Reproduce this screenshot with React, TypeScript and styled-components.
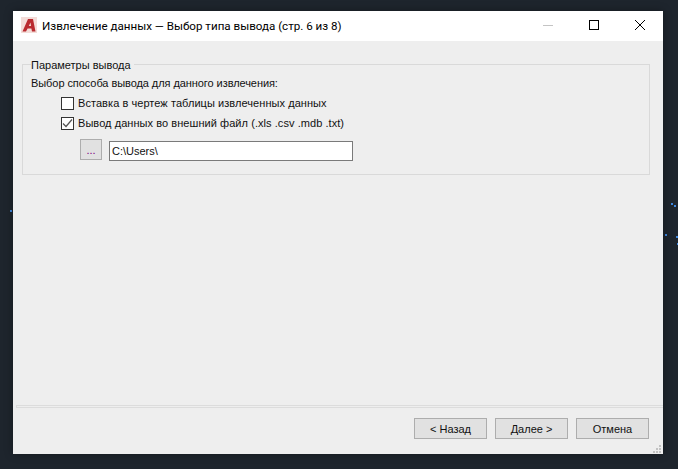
import styled, { createGlobalStyle } from "styled-components";

const dots = [
  { x: 10, y: 210 },
  { x: 671, y: 203 },
  { x: 674, y: 205 },
  { x: 665, y: 234 },
  { x: 676, y: 236 },
  { x: 677, y: 243 },
];

export default function App() {
  return (
    <Desktop>
      <GlobalStyle />
      {dots.map((d, i) => (
        <Dot key={i} $x={d.x} $y={d.y} />
      ))}
      <Dialog>
        <TitleBar>
          <AppLogo viewBox="0 0 16 16">
            <rect width="16" height="16" fill="#f3dcd8" />
            <path d="M1.5 14.5 L7 2 H12 L14.5 14.5 H11 L10.4 11.5 H6.6 L5 14.5 Z" fill="#b92a2f" />
            <path d="M7.8 9 H10 L9.5 5.4 Z" fill="#f3dcd8" />
          </AppLogo>
          <Title>Извлечение данных — Выбор типа вывода (стр. 6 из 8)</Title>
          <WindowButtons>
            <WinButton>
              <svg width="10" height="10" viewBox="0 0 10 10">
                <rect x="0" y="5" width="10" height="1" fill="#c4c4c4" />
              </svg>
            </WinButton>
            <WinButton>
              <svg width="10" height="10" viewBox="0 0 10 10">
                <rect x="0.5" y="0.5" width="9" height="9" fill="none" stroke="#000" />
              </svg>
            </WinButton>
            <WinButton>
              <svg width="10" height="10" viewBox="0 0 10 10" shapeRendering="crispEdges">
                <path d="M0 0 L10 10 M10 0 L0 10" stroke="#000" strokeWidth="1" />
              </svg>
            </WinButton>
          </WindowButtons>
        </TitleBar>
        <Body>
          <Content>
            <Group>
              <Legend>Параметры вывода</Legend>
              <Prompt>Выбор способа вывода для данного извлечения:</Prompt>
              <Options>
                <Option>
                  <Check />
                  <OptionLabel>Вставка в чертеж таблицы извлеченных данных</OptionLabel>
                </Option>
                <Option>
                  <Check>
                    <svg width="11" height="11" viewBox="0 0 11 11">
                      <path d="M1 5.5 L4 8.5 L10 1.5" fill="none" stroke="#555" strokeWidth="1.2" />
                    </svg>
                  </Check>
                  <OptionLabel>Вывод данных во внешний файл (.xls .csv .mdb .txt)</OptionLabel>
                </Option>
              </Options>
              <PathRow>
                <BrowseButton>...</BrowseButton>
                <PathInput>C:\Users\</PathInput>
              </PathRow>
            </Group>
          </Content>
          <Separator />
          <Footer>
            <FooterButton>&lt; Назад</FooterButton>
            <FooterButton>Далее &gt;</FooterButton>
            <FooterButton>Отмена</FooterButton>
          </Footer>
          <Grip viewBox="0 0 9 9">
            <path d="M6 0h2v2H6zM3 3h2v2H3zM6 3h2v2H6zM0 6h2v2H0zM3 6h2v2H3zM6 6h2v2H6z" fill="#c2c2c2" />
          </Grip>
        </Body>
      </Dialog>
    </Desktop>
  );
}

const GlobalStyle = createGlobalStyle`
  html, body {
    margin: 0;
    padding: 0;
    background: #1e252d;
  }
`;

const Desktop = styled.div`
  position: relative;
  width: 678px;
  height: 469px;
  box-sizing: border-box;
  padding: 11px 15px 15px 13px;
  overflow: hidden;
  background: #1e252d;
  font-family: "Liberation Sans", Arial, sans-serif;
  font-size: 11px;
  color: #111;
`;

const Dot = styled.div<{ $x: number; $y: number }>`
  position: absolute;
  left: ${(p) => p.$x}px;
  top: ${(p) => p.$y}px;
  width: 2px;
  height: 2px;
  background: #3f86dc;
`;

const Dialog = styled.div`
  position: relative;
  width: 650px;
  height: 443px;
  display: flex;
  flex-direction: column;
  background: #eeeeee;
  box-shadow: 0 0 8px rgba(0, 0, 0, 0.35);
`;

const TitleBar = styled.div`
  height: 30px;
  flex: none;
  display: flex;
  align-items: center;
  padding-left: 8px;
  background: #fff;
`;

const AppLogo = styled.svg`
  width: 16px;
  height: 16px;
  flex: none;
  margin-bottom: 2px;
`;

const Title = styled.div`
  margin-left: 5px;
  flex: 1;
  font-family: Roboto, "Noto Sans", sans-serif;
  font-size: 11.6px;
  color: #000;
  white-space: nowrap;
`;

const WindowButtons = styled.div`
  display: flex;
`;

const WinButton = styled.div`
  width: 46px;
  height: 30px;
  box-sizing: border-box;
  padding-bottom: 2px;
  display: flex;
  align-items: center;
  justify-content: center;
`;

const Body = styled.div`
  position: relative;
  flex: 1;
  display: flex;
  flex-direction: column;
`;

const Content = styled.div`
  flex: 1;
  padding: 23px 13px 0 9px;
`;

const Group = styled.div`
  position: relative;
  height: 111px;
  box-sizing: border-box;
  border: 1px solid #d9d9d9;
  padding: 11px 8px 0;
`;

const Legend = styled.div`
  position: absolute;
  top: -6px;
  left: 8px;
  padding-right: 3px;
  background: #eeeeee;
  line-height: 13px;
`;

const Prompt = styled.div`
  line-height: 14px;
  letter-spacing: -0.07px;
`;

const Options = styled.div`
  margin: 7px 0 0 30px;
  display: flex;
  flex-direction: column;
  gap: 7px;
`;

const Option = styled.div`
  display: flex;
  align-items: center;
  gap: 4px;
  height: 13px;
  white-space: nowrap;
  letter-spacing: 0.06px;
`;

const OptionLabel = styled.span`
  margin-top: -2px;
`;

const Check = styled.div`
  width: 13px;
  height: 13px;
  box-sizing: border-box;
  border: 1px solid #333;
  background: #fff;
  display: flex;
  align-items: center;
  justify-content: center;
`;

const PathRow = styled.div`
  margin: 9px 0 0 49px;
  display: flex;
  align-items: flex-start;
  gap: 7px;
`;

const BrowseButton = styled.div`
  width: 22px;
  height: 21px;
  box-sizing: border-box;
  border: 1px solid #adadad;
  background: #e1e1e1;
  color: #800080;
  display: flex;
  align-items: center;
  justify-content: center;
`;

const PathInput = styled.div`
  width: 244px;
  height: 20px;
  margin-top: 2px;
  box-sizing: border-box;
  border: 1px solid #7a7a7a;
  background: #fff;
  padding-left: 2px;
  line-height: 18px;
`;

const Separator = styled.div`
  flex: none;
  margin-left: 3px;
  height: 3px;
  box-sizing: border-box;
  border: 1px solid #dcdcdc;
  border-right: none;
`;

const Footer = styled.div`
  flex: none;
  height: 46px;
  box-sizing: border-box;
  padding: 10px 14px 0 0;
  display: flex;
  justify-content: flex-end;
  gap: 8px;
`;

const FooterButton = styled.div`
  width: 73px;
  height: 21px;
  box-sizing: border-box;
  border: 1px solid #adadad;
  background: #e1e1e1;
  display: flex;
  align-items: center;
  justify-content: center;
`;

const Grip = styled.svg`
  position: absolute;
  right: 1px;
  bottom: 0;
  width: 9px;
  height: 9px;
`;
